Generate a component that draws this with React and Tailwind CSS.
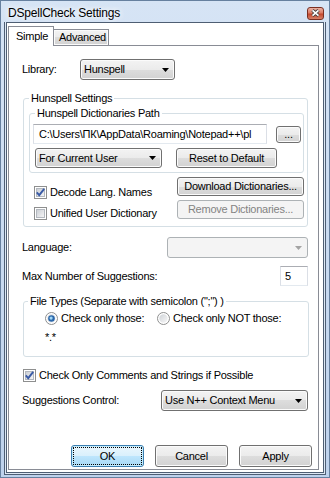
import React from 'react'

const btnBg = 'bg-[linear-gradient(to_bottom,#f3f3f3_0%,#ebebeb_50%,#dddddd_50%,#d2d2d2_100%)] shadow-[inset_0_0_0_1px_#fbfbfb]'

const Arrow = ({ color = '#000' }) => (
  <svg width="7" height="4" viewBox="0 0 7 4" className="shrink-0">
    <path d="M0 0H7L3.5 4Z" fill={color} />
  </svg>
)

const Button = ({ children, className = '' }) => (
  <div className={`flex items-center justify-center rounded-[3px] border border-[#707070] ${btnBg} ${className}`}>
    {children}
  </div>
)

const Select = ({ value, className = '' }) => (
  <div className={`flex items-center justify-between rounded-[3px] border border-[#707070] pl-[3px] pr-[5px] ${btnBg} ${className}`}>
    <span className="whitespace-nowrap">{value}</span>
    <Arrow />
  </div>
)

const CheckBox = ({ id, checked }) => (
  <svg width="13" height="13" viewBox="0 0 13 13" className="shrink-0">
    <defs>
      <linearGradient id={id} x1="0" y1="0" x2="1" y2="1">
        <stop offset="0" stopColor="#c9cdd3" />
        <stop offset="1" stopColor="#f7f7f7" />
      </linearGradient>
    </defs>
    <rect x="0.5" y="0.5" width="12" height="12" fill="#fff" stroke="#8e8f8f" />
    <rect x="2.5" y="2.5" width="8" height="8" fill={`url(#${id})`} stroke="#b3b8bf" />
    {checked && <path d="M2.8 6.4L5.2 9.2L10.2 2.8" fill="none" stroke="#3a5ba6" strokeWidth="1.9" />}
  </svg>
)

const Radio = ({ id, checked }) => (
  <svg width="13" height="13" viewBox="0 0 13 13" className="shrink-0">
    <defs>
      <linearGradient id={id} x1="0" y1="0" x2="1" y2="1">
        <stop offset="0" stopColor="#cfd3d8" />
        <stop offset="1" stopColor="#f8f8f8" />
      </linearGradient>
    </defs>
    <circle cx="6.5" cy="6.5" r="6" fill="#fff" stroke="#8e8f8f" />
    <circle cx="6.5" cy="6.5" r="4.2" fill={`url(#${id})`} />
    {checked && (
      <>
        <circle cx="6.5" cy="6.5" r="3.3" fill="#2a66aa" />
        <circle cx="6.1" cy="6.1" r="1.6" fill="#9fd6f6" />
      </>
    )}
  </svg>
)

const App = () => {
  return (
    <div className="flex h-[478px] w-[330px] flex-col border border-[#66809f] bg-[linear-gradient(to_bottom,#d6e4f5,#bed2ec)] font-['Liberation_Sans',Arial,sans-serif] text-[11px] tracking-[-0.25px] text-black">
      {/* title bar */}
      <div className="flex h-[21px] shrink-0 items-center justify-between pl-[7px] pt-[3px]">
        <span className="text-[12px] tracking-[-0.2px] [text-shadow:0_0_6px_#fff,0_0_6px_#fff]">DSpellCheck Settings</span>
        <div className="mr-[5px] flex h-[13px] w-[17px] items-center justify-center rounded-[3px] border border-[#7a2f22] bg-[linear-gradient(to_bottom,#eab1a3_0%,#db7a64_45%,#c4472d_55%,#d6826a_100%)]">
          <svg width="9" height="8" viewBox="0 0 9 8">
            <path d="M1.5 1.3L7.5 6.7M7.5 1.3L1.5 6.7" stroke="#3d3d3d" strokeWidth="3.2" />
            <path d="M1.5 1.3L7.5 6.7M7.5 1.3L1.5 6.7" stroke="#fff" strokeWidth="1.6" />
          </svg>
        </div>
      </div>

      {/* client edge */}
      <div className="mx-[3px] mb-[2px] flex flex-1 flex-col border-x border-b border-[#4e5e73] bg-[#dde8f5] px-px pb-px">
        <div className="flex flex-1 flex-col border border-[#4e5e73] bg-white">
          {/* tabs */}
          <div className="relative z-10 mt-[3px] -mb-px flex items-end pl-px">
            <div className="relative z-10 h-[20px] w-[46px] border border-b-0 border-[#898c95] bg-white pl-[7px] leading-[19px]">
              Simple
            </div>
            <div className={`-ml-px mb-px h-[16px] w-[56px] border border-b-0 border-[#898c95] pl-[5px] leading-[15px] ${btnBg}`}>
              Advanced
            </div>
          </div>

          {/* tab page */}
          <div className="mb-[2px] ml-px mr-[4px] flex flex-1 flex-col border border-[#898c95] bg-white pl-[13px]">
            <div className="mt-[13px] flex h-[21px] items-center">
              <span className="w-[58px]">Library:</span>
              <Select value="Hunspell" className="h-[21px] w-[95px]" />
            </div>

            <fieldset className="mt-[11px] ml-px w-[285px] rounded-[3px] border border-[#d5dfe5] pb-[5px] pl-[5px] pr-[3px]">
              <legend className="px-[2px] leading-[15px]">Hunspell Settings</legend>

              <fieldset className="rounded-[3px] border border-[#d5dfe5] pb-[4px] pl-[3px]">
                <legend className="ml-[2px] px-[2px] leading-[15px]">Hunspell Dictionaries Path</legend>
                <div className="mt-[3px] flex items-center">
                  <div className="h-[20px] w-[234px] overflow-hidden whitespace-nowrap border border-[#abadb3] border-x-[#dbdfe6] border-b-[#e3e9ef] pl-[5px] leading-[18px]">
                    {'C:\\Users\\ПК\\AppData\\Roaming\\Notepad++\\pl'}
                  </div>
                  <Button className="ml-[9px] h-[17px] w-[25px] leading-none">...</Button>
                </div>
                <div className="mt-[4px] ml-[2px] flex">
                  <Select value="For Current User" className="h-[20px] w-[127px]" />
                  <Button className="ml-[14px] h-[20px] w-[101px]">Reset to Default</Button>
                </div>
              </fieldset>

              <div className="mt-[4px] flex justify-between">
                <div className="flex flex-col gap-[6px] pl-[5px] pt-[8px]">
                  <label className="flex h-[15px] items-center gap-[3px]">
                    <CheckBox id="cb1" checked />
                    <span>Decode Lang. Names</span>
                  </label>
                  <label className="flex h-[15px] items-center gap-[3px]">
                    <CheckBox id="cb2" />
                    <span>Unified User Dictionary</span>
                  </label>
                </div>
                <div className="flex w-[127px] flex-col gap-[4px]">
                  <Button className="h-[19px]">Download Dictionaries...</Button>
                  <div className="flex h-[19px] items-center justify-center rounded-[3px] border border-[#adb2b5] bg-[#f4f4f4] text-[#838383]">
                    Remove Dictionaries...
                  </div>
                </div>
              </div>
            </fieldset>

            <div className="mt-[10px] flex h-[21px] w-[286px] items-center justify-between">
              <span>Language:</span>
              <div className="flex h-[21px] w-[141px] items-center justify-end rounded-[3px] border border-[#adb2b5] bg-[#f4f4f4] pr-[5px]">
                <Arrow color="#a3a3a3" />
              </div>
            </div>

            <div className="mt-[8px] flex h-[20px] w-[286px] items-center justify-between">
              <span>Max Number of Suggestions:</span>
              <div className="h-[20px] w-[28px] border border-[#abadb3] border-x-[#dbdfe6] border-b-[#e3e9ef] pl-[4px] leading-[18px]">5</div>
            </div>

            <fieldset className="mt-[8px] ml-px w-[286px] rounded-[3px] border border-[#d5dfe5] pb-[11px] pl-[4px]">
              <legend className="px-[2px] leading-[15px]">File Types (Separate with semicolon (";") )</legend>
              <div className="mt-[1px] flex h-[16px] items-center pl-[17px]">
                <label className="flex w-[112px] items-center gap-[3px]">
                  <Radio id="rb1" checked />
                  <span>Check only those:</span>
                </label>
                <label className="flex items-center gap-[3px]">
                  <Radio id="rb2" />
                  <span>Check only NOT those:</span>
                </label>
              </div>
              <div className="mt-[4px] pl-[17px] leading-[15px]">*.*</div>
            </fieldset>

            <label className="mt-[11px] ml-px flex h-[15px] items-center gap-[3px]">
              <CheckBox id="cb3" checked />
              <span>Check Only Comments and Strings if Possible</span>
            </label>

            <div className="mt-[7px] flex h-[21px] w-[286px] items-center justify-between">
              <span>Suggestions Control:</span>
              <Select value="Use N++ Context Menu" className="h-[21px] w-[147px]" />
            </div>

            <div className="mt-[34px] flex w-[290px] justify-end gap-[11px]">
              <div className="flex h-[22px] w-[73px] items-center justify-center rounded-[3px] border border-[#3c7fb1] bg-[linear-gradient(to_bottom,#eaf6fd_0%,#d9f0fc_50%,#bee6fd_50%,#a7d9f5_100%)] shadow-[inset_0_0_0_1px_#c4ecfb] outline-1 outline-dotted outline-black -outline-offset-3">
                OK
              </div>
              <Button className="h-[22px] w-[73px]">Cancel</Button>
              <Button className="h-[22px] w-[73px]">Apply</Button>
            </div>
          </div>
        </div>
      </div>
    </div>
  )
}

export default App
